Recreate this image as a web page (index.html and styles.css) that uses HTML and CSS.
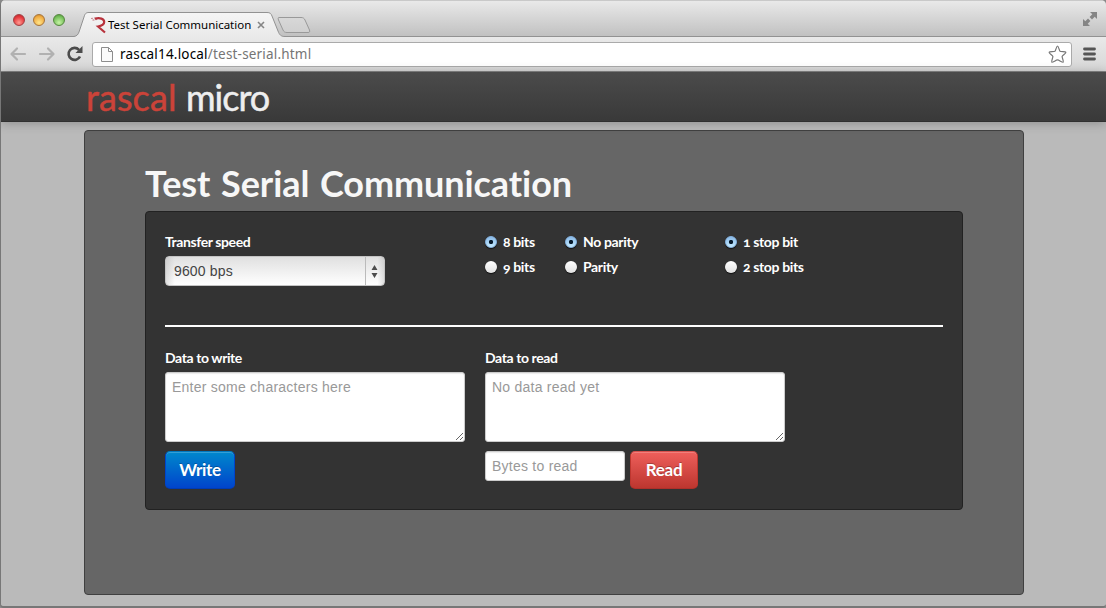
FILE: index.html
```html
<!DOCTYPE html>
<html lang="en">
<head>
<meta charset="utf-8">
<title>Test Serial Communication</title>
<link rel="stylesheet" href="styles.css">
</head>
<body>
<div class="window">
  <header class="titlebar">
    <div class="lights"><i class="light red"></i><i class="light amber"></i><i class="light green"></i></div>
    <div class="tab">
      <svg class="tab-shape" width="258" height="38" viewBox="0 0 258 38">
        <defs><linearGradient id="tabfill" x1="0" y1="0" x2="0" y2="1"><stop offset="0" stop-color="#f5f5f5"/><stop offset="1" stop-color="#e9e9e9"/></linearGradient>
        <linearGradient id="newfill" x1="0" y1="0" x2="0" y2="1"><stop offset="0" stop-color="#d8d8d8"/><stop offset="1" stop-color="#cfcfcf"/></linearGradient></defs>
        <path d="M-2 36.500C1 36 2 34.500 3 32L8 17C9 13.500 10 12.500 13 12.500H191C194 12.500 195 13.500 196 16L202 31C203.500 35 205 36.500 209 36.500V38H-2Z" fill="url(#tabfill)"/>
        <path d="M-2 36.500C1 36 2 34.500 3 32L8 17C9 13.500 10 12.500 13 12.500H191C194 12.500 195 13.500 196 16L202 31C203.500 35 205 36.500 209 36.500" fill="none" stroke="#929292"/>
        <path d="M203 17.500H225C227 17.500 228 18 229 20L233.500 30C234 32 233.500 32.500 232 32.500H211C209 32.500 208 32 207 30L202.500 20C202 18.500 202 17.500 203 17.500Z" fill="url(#newfill)" stroke="#999"/>
      </svg>
      <div class="tab-content">
        <svg class="favicon" width="16" height="16" viewBox="0 0 16 16"><path d="M0 1.500L4 1M1.500 3.200L6 2.300" stroke="#c98b92" stroke-width="1.200" stroke-dasharray="2 1"/><path d="M4 1.600C9 .6 13.200 1.500 13.200 5C13.200 8 10.500 8.800 7 9.500L14 15.500" fill="none" stroke="#b8323c" stroke-width="2.200"/></svg>
        <span class="tab-title">Test Serial Communication</span>
        <svg class="tab-close" width="8" height="8" viewBox="0 0 8 8"><path d="M1 1L7 7M7 1L1 7" stroke="#858585" stroke-width="1.600"/></svg>
      </div>
    </div>
    <svg class="expand" width="16" height="16" viewBox="0 0 16 16"><path d="M8 1H15V8L12.700 5.700L10 8.400L7.600 6L10.300 3.300ZM1 8V15H8L5.700 12.700L8.400 10L6 7.600L3.300 10.300Z" fill="#858585"/></svg>
  </header>
  <div class="toolbar">
    <svg class="nav-icons" width="76" height="20" viewBox="0 0 76 20">
      <path d="M18 10H5M10 4.500L4.500 10L10 15.500M33 10H46M41 4.500L46.500 10L41 15.500" fill="none" stroke="#b1b1b1" stroke-width="2.200" stroke-linecap="round" stroke-linejoin="round"/>
      <path d="M73 12.500A6 6 0 1 1 72 5.800" fill="none" stroke="#4c4c4c" stroke-width="2.600"/><path d="M75.500 2V9H68.500Z" fill="#4c4c4c"/>
    </svg>
    <div class="address">
      <svg class="page-icon" width="12" height="15" viewBox="0 0 12 15"><path d="M.5.5H7.500L11.500 4.500V14.500H.5ZM7.500.5V4.500H11.500" fill="#fafafa" stroke="#8d8d8d"/></svg>
      <span class="url">rascal14.local<span class="url-path">/test-serial.html</span></span>
      <svg class="star" width="19" height="19" viewBox="0 0 19 19"><path d="M9.500 1C10.400 1 11 4.600 12 6.200C13 6.900 17.500 6.500 17.900 7.300C18.200 8.200 14.600 10.200 14.100 11.400C13.900 12.600 16 16.500 15.200 17.200C14.400 17.800 11 14.900 9.500 14.900S4.600 17.800 3.800 17.200C3 16.500 5.100 12.600 4.900 11.400C4.400 10.200.8 8.200 1.100 7.300C1.500 6.500 6 6.900 7 6.200C8 4.600 8.600 1 9.500 1Z" fill="#fff" stroke="#777" stroke-width="1.200"/></svg>
    </div>
    <svg class="menu" width="13" height="14" viewBox="0 0 13 14"><path d="M1.500 2H11.500M1.500 7H11.500M1.500 12H11.500" stroke="#555" stroke-width="2.800" stroke-linecap="round"/></svg>
  </div>
  <nav class="navbar"><div class="brand"><span class="brand-red">rascal</span><span class="brand-white">micro</span></div></nav>
  <main class="page">
    <section class="container">
      <h1>Test Serial Communication</h1>
      <form class="panel">
        <div class="settings">
          <div class="speed">
            <label class="label">Transfer speed</label>
            <div class="select"><span>9600 bps</span><svg width="19" height="28" viewBox="0 0 19 28"><path d="M.5 0V28" stroke="#bbb"/><path d="M6.500 13L9.500 8L12.500 13ZM6.500 16L9.500 21L12.500 16Z" fill="#4d4d4d"/></svg></div>
          </div>
          <div class="radios bits"><label class="option"><i class="radio on"></i>8 bits</label><label class="option"><i class="radio"></i>9 bits</label></div>
          <div class="radios parity"><label class="option"><i class="radio on"></i>No parity</label><label class="option"><i class="radio"></i>Parity</label></div>
          <div class="radios stop"><label class="option"><i class="radio on"></i>1 stop bit</label><label class="option"><i class="radio"></i>2 stop bits</label></div>
        </div>
        <hr class="rule">
        <div class="data">
          <div class="column">
            <label class="label">Data to write</label>
            <textarea class="field area" placeholder="Enter some characters here"></textarea>
            <div class="actions"><button type="button" class="btn write">Write</button></div>
          </div>
          <div class="column">
            <label class="label">Data to read</label>
            <textarea class="field area" placeholder="No data read yet"></textarea>
            <div class="actions"><input class="field bytes" placeholder="Bytes to read"><button type="button" class="btn read">Read</button></div>
          </div>
        </div>
      </form>
    </section>
  </main>
</div>
</body>
</html>
```
FILE: styles.css
```css
* { box-sizing: border-box; }
body { margin: 0; background: #8a8a8a; }
svg { display: block; flex: none; overflow: visible; }
.window {
  width: 1106px; height: 608px; overflow: hidden;
  display: flex; flex-direction: column;
  border-left: 1px solid #777; border-bottom: 2px solid #777;
  border-radius: 5px 5px 4px 4px;
  background: #bababa;
}
.titlebar {
  height: 37px; flex: none; display: flex; align-items: flex-start;
  background: linear-gradient(#e9e9e9, #c1c1c1);
  border-top: 1px solid #c9c9c9; border-bottom: 1px solid #929292;
}
.lights { display: flex; gap: 8px; padding: 13px 0 0 12px; width: 75px; }
.light { width: 12px; height: 12px; border-radius: 50%; border: 1px solid; }
.red { background: radial-gradient(circle at 50% 75%, #ff9b92, #e63c40 60%, #b82227); border-color: #a14043; }
.amber { background: radial-gradient(circle at 50% 75%, #ffe58a, #f0ac42 65%, #c47f22); border-color: #a6743a; }
.green { background: radial-gradient(circle at 50% 75%, #c5f3a4, #75bf59 65%, #4c9138); border-color: #55873f; }
.tab { display: grid; width: 258px; height: 37px; margin-top: -1px; }
.tab-shape, .tab-content { grid-area: 1 / 1; }
.tab-content { display: flex; align-items: center; height: 16px; margin: 17px 0 0 15px; }
.tab-title { font: 11.5px/16px "Noto Sans", sans-serif; color: #000; width: 143px; white-space: nowrap; letter-spacing: -.02px; margin-left: 1px; }
.tab-close { margin-left: 6px; }
.expand { margin: 10px 8px 0 auto; }
.toolbar {
  height: 35px; flex: none; display: flex; align-items: center; padding: 0 10px 0 6px;
  background: linear-gradient(#e9e9e9, #d7d7d7);
  border-bottom: 1px solid #858585;
}
.address {
  width: 980px; height: 25px; margin-left: 9px; padding: 0 4px 0 8px;
  display: flex; align-items: center;
  background: #fff; border: 1px solid #aaa; border-radius: 3px;
}
.url { margin-left: 7px; font: 13.500px/20px "Noto Sans", sans-serif; letter-spacing: .19px; color: #000; }
.url-path { color: #757575; }
.star { margin-left: auto; }
.menu { margin-left: 11px; }
.navbar {
  height: 50px; flex: none; padding-left: 85px; position: relative;
  background: linear-gradient(#4b4b4b, #393939);
  border-bottom: 1px solid #303030;
  box-shadow: 0 1px 10px rgba(0, 0, 0, .25);
}
.brand { display: flex; font: 400 36px/50px Lato, sans-serif; }
.brand-red { color: #cb4339; width: 100px; letter-spacing: .1px; -webkit-text-stroke: .5px #cb4339; }
.brand-white { color: #eee; letter-spacing: -1px; -webkit-text-stroke: .5px #eee; }
.page { padding: 8px 0 0 83px; }
.container {
  width: 940px; height: 465px; padding: 32px 60px 0;
  background: #666; border: 1px solid #404040; border-radius: 4px;
}
h1 { margin: 0; height: 48px; font: 700 36px/40px Lato, sans-serif; letter-spacing: -.08px; word-spacing: 2px; color: #f7f7f7; white-space: nowrap; }
.panel {
  width: 818px; height: 299px; padding: 19px 19px;
  background: #333; border: 1px solid #222; border-radius: 4px;
  font: 700 14px/20px Lato, sans-serif; color: #fff;
}
.settings { display: flex; height: 94px; }
.speed { width: 320px; }
.label { display: block; height: 25px; line-height: 21px; letter-spacing: -.4px; }
.select {
  width: 220px; height: 30px; display: flex; align-items: center; justify-content: space-between;
  padding: 0 0 0 8px; border: 1px solid #c4c4c4; border-radius: 4px;
  background: linear-gradient(90deg, rgba(170,170,170,.35), transparent 4%, transparent 97%, rgba(170,170,170,.35)), linear-gradient(#e0e0e0, #fff);
  font: 14px/20px "Liberation Sans", sans-serif; letter-spacing: .15px; color: #444;
}
.radios { font-variant-numeric: oldstyle-nums; letter-spacing: -.35px; }
.bits { width: 80px; }
.parity { width: 160px; }
.option { display: flex; align-items: center; height: 25px; padding-bottom: 4px; white-space: nowrap; }
.radio {
  width: 12px; height: 12px; margin-right: 6px; border-radius: 50%;
  background: linear-gradient(#fff, #e2e2e2); box-shadow: 0 1px 1px #111;
}
.radio.on { background: radial-gradient(circle, #071b2d 0 1.800px, transparent 2.500px), linear-gradient(#8bbbe9, #c3eaff); border: 1px solid #86b4e2; }
.rule { height: 2px; margin: 0 0 20px; border: 0; background: #fff; }
.data { display: flex; gap: 20px; }
.column { width: 300px; }
.field {
  display: block; padding: 4px 6px; border: 1px solid #ccc; border-radius: 3px; outline: 0;
  font: 14px/20px "Liberation Sans", sans-serif; letter-spacing: .24px; box-shadow: inset 0 1px 1px rgba(0,0,0,.08);
}
.field::placeholder { color: #999; opacity: 1; }
.area { width: 300px; height: 70px; resize: both; }
.actions { display: flex; gap: 5px; margin-top: 9px; align-items: flex-start; }
.bytes { width: 140px; height: 30px; }
.btn {
  height: 38px; padding: 0; border: 1px solid; border-radius: 5px; color: #fff;
  font: 700 17px/36px Lato, sans-serif; letter-spacing: -.3px; text-shadow: 0 -1px 0 rgba(0,0,0,.25);
  box-shadow: inset 0 1px 0 rgba(255,255,255,.2);
}
.write { width: 70px; background: linear-gradient(#0088cc, #0044cc); border-color: #0078be #0044cc #003cb4; }
.read { width: 68px; background: linear-gradient(#ee5f5b, #bd362f); border-color: #d6504c #bd362f #ae302a; }
```
